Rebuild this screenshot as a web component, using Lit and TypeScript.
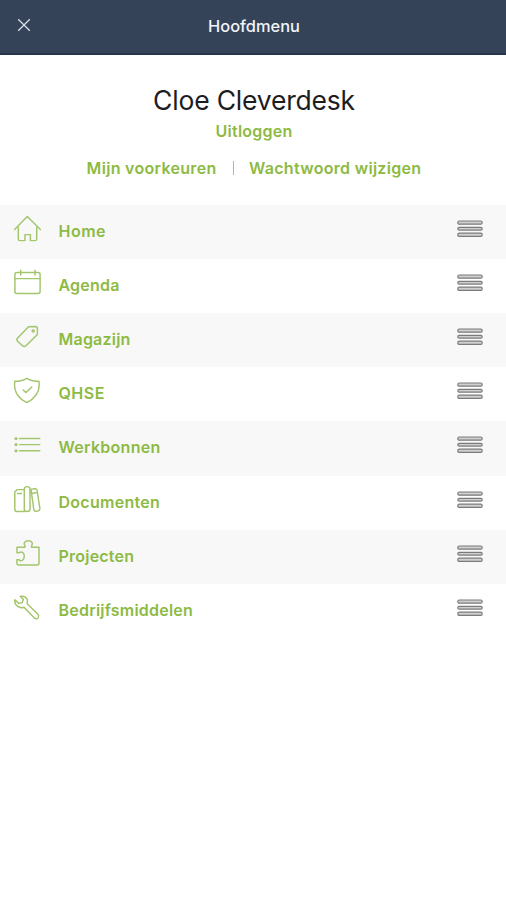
import { LitElement, html, css, svg } from "lit";
import { customElement } from "lit/decorators.js";

const items = [
  { label: "Home", cls: "home", icon: svg`<path d="M1.6 15.6 14.3 2.6 27.4 15.6M5.3 13.5V25Q5.3 26.6 7 26.6H12V20.6H17.4V26.6H22Q23.7 26.6 23.7 25V13.5"/>` },
  { label: "Agenda", cls: "agenda", icon: svg`<rect x="1.9" y="4.5" width="25.2" height="21" rx="2"/><path d="M2 10.6H27M7.7 2.2V7M22 2.2V7"/>` },
  { label: "Magazijn", cls: "magazijn", icon: svg`<path d="M15.5 4.7 22.5 4.5Q24.4 4.5 24.4 6.3V12.6L13 23.8Q11.2 25.4 9.4 23.7L4.6 19.2Q3.1 17.7 4.7 16Z"/><circle cx="20.2" cy="9" r="1.1"/>` },
  { label: "QHSE", cls: "qhse", icon: svg`<path d="M13.8 2.3Q18 5.2 26 5.3 27 13 23 19 19.5 24 13.8 26.6 8 24 4.5 19 .8 13 1.7 5.3 9.5 5.2 13.8 2.3ZM10.2 14 13 16.6 18.8 11"/>` },
  { label: "Werkbonnen", cls: "werkbonnen", icon: svg`<path d="M6.5 8.5H26.8M6.5 14.6H26.8M6.5 20.8H26.8"/><circle cx="3" cy="8.5" r=".9"/><circle cx="3" cy="14.6" r=".9"/><circle cx="3" cy="20.8" r=".9"/>` },
  { label: "Documenten", cls: "documenten", icon: svg`<path d="M11.3 4.6H4.3L1.8 7V24.4Q1.8 26.4 3.8 26.4H11.3M4.5 8.5H8.5M11.3 4V24.5Q11.3 26.4 14.2 26.4T17 24.5V4Q17 1.6 14.2 1.6T11.3 4ZM18 4.4 22.4 3.5 24 5 26.9 23.5Q27 25.5 25 26L22 26.4 20.8 24.5 18 4.4M19 8.5 23 7.8"/>` },
  { label: "Projecten", cls: "projecten", icon: svg`<path d="M4 12.5V8.2H12V6.5C10 4.8 11.5 1.8 15.3 1.8S20.5 4.8 18.6 6.5V8.2H26V24Q26 25.9 24 25.9H5.6Q3.9 25.9 3.9 24V20.7H6C8 23 11.3 21 11.3 17.3S8.5 11.8 6 13.8H4Z"/>` },
  { label: "Bedrijfsmiddelen", cls: "bedrijfsmiddelen", icon: svg`<path d="M7.3 3.2Q12 2.6 14 6 15 8.5 14.2 10.8L25.2 21.6Q26.5 23.3 25 24.9 23.4 26.5 21.6 25.2L11 14.2Q7.5 15.5 4.4 13.1 1.3 10.7 1.8 6.8L5.8 10.4 9.2 9.8 10.3 6.6Z"/>` },
];

@customElement("app-root")
export class AppRoot extends LitElement {
  static styles = css`
    :host { display: block; width: 100%; height: 900px; background: #fff; font-family: Inter, "Open Sans", sans-serif; overflow: hidden; }
    header { box-sizing: border-box; height: 55px; background: #344358; border-bottom: 2px solid #25344b; display: grid; grid-template-columns: 48px 1fr 48px; align-items: center; color: #f1f4f8; }
    .close { width: 14px; height: 14px; margin: 0 0 3px 17px; stroke: #d8dee7; stroke-width: 1.3; fill: none; }
    h1 { margin: 0 0 2px; font-size: 16.4px; line-height: 20px; font-weight: 500; text-align: center; padding-left: 2px; }
    .profile { height: 150px; text-align: center; display: flex; flex-direction: column; align-items: center; }
    h2 { margin: 29px 0 0 2px; font-size: 26.5px; line-height: 32px; font-weight: 400; letter-spacing: -0.2px; color: #1d1d1f; }
    .link { color: #8dba43; font-size: 16px; line-height: 20px; font-weight: 600; letter-spacing: 0.22px; white-space: nowrap; }
    .logout { margin: 5px 0 17px 2px; }
    .links { display: flex; margin-left: 2px; }
    .prefs, .password { letter-spacing: 0.3px; }
    .sep { width: 1.5px; height: 14px; margin: 3px 15px 0 16px; background: #a7c770; }
    .row { height: 54.12px; display: grid; grid-template-columns: 30px 1fr 26px; column-gap: 15.5px; align-items: start; padding: 0 23.5px 0 13px; }
    .row:nth-child(odd) { background: #f8f8f8; }
    .icon { width: 30px; height: 30px; margin-top: 9px; fill: none; stroke: #a3c56b; stroke-width: 1.45; stroke-linecap: round; stroke-linejoin: round; }
    .row .link { margin-top: 16px; }
    .home, .qhse { letter-spacing: 0.5px; }
    .werkbonnen, .documenten { letter-spacing: 0.28px; }
    .grip { width: 26px; height: 18px; margin-top: 15px; fill: #cfcfcf; stroke: #7b7b7b; stroke-width: 1.2; }
  `;

  render() {
    return html`
      <header>
        <svg class="close" viewBox="0 0 14 14"><path d="M1.2 1.2 12.8 12.8M12.8 1.2 1.2 12.8" /></svg>
        <h1>Hoofdmenu</h1>
      </header>
      <section class="profile">
        <h2>Cloe Cleverdesk</h2>
        <span class="link logout">Uitloggen</span>
        <div class="links">
          <span class="link prefs">Mijn voorkeuren</span><i class="sep"></i><span class="link password">Wachtwoord wijzigen</span>
        </div>
      </section>
      <nav>
        ${items.map((item) => html`
          <div class="row">
            <svg class="icon" viewBox="0 0 30 30">${item.icon}</svg>
            <span class="link ${item.cls}">${item.label}</span>
            <svg class="grip" viewBox="0 0 26 18">
              <rect x="0.8" y="1" width="24.4" height="3.2" rx="1.5" />
              <rect x="0.8" y="7.3" width="24.4" height="2.8" rx="1.4" />
              <rect x="0.8" y="13.2" width="24.4" height="3.2" rx="1.5" />
            </svg>
          </div>`)}
      </nav>`;
  }
}
